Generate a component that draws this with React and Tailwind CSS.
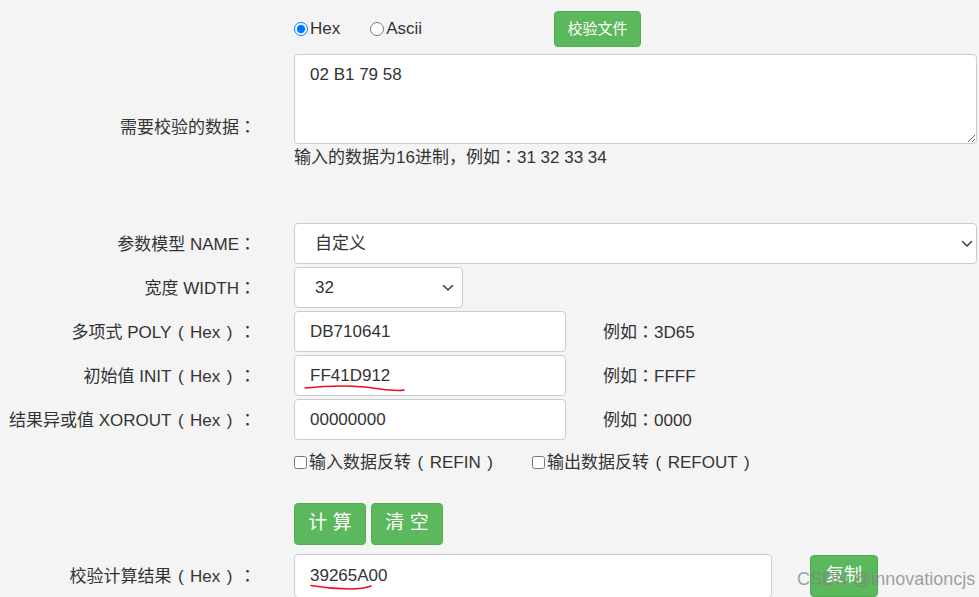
import React from "react";

const font = { fontFamily: '"Liberation Sans", Arial, "Noto Sans CJK SC", sans-serif' };
const tc = { fontFamily: '"Noto Sans CJK TC", sans-serif' };

function T({ children }) {
  const parts = String(children).split(/([（）：])/);
  return (
    <>
      {parts.map((p, i) => {
        if (p === "：")
          return (
            <span key={i} style={tc}>
              ：
            </span>
          );
        if (p === "（")
          return (
            <span key={i} className="inline-block w-[1.1em] text-center">
              (
            </span>
          );
        if (p === "）")
          return (
            <span key={i} className="inline-block w-[1.1em] text-center">
              )
            </span>
          );
        return <React.Fragment key={i}>{p}</React.Fragment>;
      })}
    </>
  );
}

function Chevron({ className }) {
  return (
    <svg className={className} width="12" height="8" viewBox="0 0 12 8" fill="none">
      <path d="M1.5 1.5 L6 6 L10.5 1.5" stroke="#444" strokeWidth="1.6" strokeLinecap="round" strokeLinejoin="round" />
    </svg>
  );
}

function Row({ label, children, className = "" }) {
  return (
    <div className={"flex items-center " + className}>
      <div className="w-[256px] shrink-0 text-right text-[17px] text-[#333]">
        <T>{label}</T>
      </div>
      <div className="ml-[38px] flex flex-1 items-center">{children}</div>
    </div>
  );
}

const inputCls =
  "h-[41px] rounded-[4px] border border-[#ccc] bg-white px-[15px] text-[17px] text-[#333] outline-none";

export default function App() {
  return (
    <div
      className="relative h-[597px] w-[979px] overflow-hidden bg-[#f4f4f4] text-[#333] [text-spacing-trim:space-all]"
      style={font}
    >
      {/* radios + file button */}
      <div className="flex pt-[11px]">
        <div className="w-[294px] shrink-0" />
        <div className="flex h-[36px] w-[260px] items-center text-[17px]">
          <label className="flex items-center">
            <input type="radio" name="fmt" defaultChecked className="m-0 h-[14px] w-[14px]" />
            <span className="ml-[2px]">Hex</span>
          </label>
          <label className="ml-[30px] flex items-center">
            <input type="radio" name="fmt" className="m-0 h-[14px] w-[14px]" />
            <span className="ml-[2px]">Ascii</span>
          </label>
        </div>
        <button className="h-[36px] w-[87px] rounded-[4px] border border-[#4cae4c] bg-[#5cb85c] text-[15px] text-white">
          校验文件
        </button>
      </div>

      {/* textarea row */}
      <div className="mt-[7px] flex">
        <div className="w-[256px] shrink-0 pt-[59px] text-right text-[17px]">
          <T>需要校验的数据：</T>
        </div>
        <div className="ml-[38px] flex-1 pr-[2px]">
          <textarea
            defaultValue="02 B1 79 58"
            className="block h-[90px] w-full rounded-[4px] border border-[#ccc] bg-white px-[15px] py-[9px] text-[17px] leading-[22px] text-[#333] outline-none"
            style={font}
          />
          <div className="mt-[1px] text-[17px] leading-[22px]">
            <T>输入的数据为16进制，例如：31 32 33 34</T>
          </div>
        </div>
      </div>

      {/* selects and inputs */}
      <div className="mt-[54px] flex flex-col gap-[3px]">
        <Row label="参数模型 NAME：">
          <div className="relative mr-[2px] flex-1">
            <select className={inputCls + " w-full appearance-none pl-[20px]"} style={font}>
              <option>自定义</option>
            </select>
            <Chevron className="pointer-events-none absolute right-[4px] top-[17px]" />
          </div>
        </Row>
        <Row label="宽度 WIDTH：">
          <div className="relative w-[169px]">
            <select className={inputCls + " w-full appearance-none pl-[20px]"} style={font}>
              <option>32</option>
            </select>
            <Chevron className="pointer-events-none absolute right-[9px] top-[17px]" />
          </div>
        </Row>
        <Row label="多项式 POLY（Hex）：">
          <input className={inputCls + " w-[272px]"} style={font} defaultValue="DB710641" />
          <span className="ml-[37px] text-[17px]">
            <T>例如：3D65</T>
          </span>
        </Row>
        <Row label="初始值 INIT（Hex）：">
          <div className="relative">
            <input className={inputCls + " w-[272px]"} style={font} defaultValue="FF41D912" />
            <svg className="pointer-events-none absolute left-[10px] top-[29px]" width="102" height="10" viewBox="0 0 102 10" fill="none">
              <path d="M1 4 C 20 2, 40 1, 60 3 S 90 8, 100 6" stroke="#e8101a" strokeWidth="1.6" strokeLinecap="round" />
            </svg>
          </div>
          <span className="ml-[37px] text-[17px]">
            <T>例如：FFFF</T>
          </span>
        </Row>
        <Row label="结果异或值 XOROUT（Hex）：">
          <input className={inputCls + " w-[272px]"} style={font} defaultValue="00000000" />
          <span className="ml-[37px] text-[17px]">
            <T>例如：0000</T>
          </span>
        </Row>
      </div>

      {/* checkboxes */}
      <div className="mt-[10px] flex">
        <div className="w-[294px] shrink-0" />
        <label className="flex w-[238px] items-center text-[17px]">
          <input type="checkbox" className="m-0 h-[13px] w-[13px]" />
          <span className="ml-[2px]">
            <T>输入数据反转（REFIN）</T>
          </span>
        </label>
        <label className="flex items-center text-[17px]">
          <input type="checkbox" className="m-0 h-[13px] w-[13px]" />
          <span className="ml-[2px]">
            <T>输出数据反转（REFOUT）</T>
          </span>
        </label>
      </div>

      {/* buttons */}
      <div className="mt-[27px] flex">
        <div className="w-[294px] shrink-0" />
        <button className="h-[42px] w-[72px] rounded-[4px] border border-[#4cae4c] bg-[#5cb85c] text-[19px] text-white">
          计 算
        </button>
        <button className="ml-[5px] h-[42px] w-[72px] rounded-[4px] border border-[#4cae4c] bg-[#5cb85c] text-[19px] text-white">
          清 空
        </button>
      </div>

      {/* result */}
      <div className="mt-[9px]">
        <Row label="校验计算结果（Hex）：">
          <div className="relative">
            <input
              readOnly
              className={inputCls + " h-[44px] w-[478px] bg-[#eee]"}
              style={font}
              defaultValue="39265A00"
            />
            <svg className="pointer-events-none absolute left-[16px] top-[30px]" width="64" height="8" viewBox="0 0 64 8" fill="none">
              <path d="M1 1.5 C 15 4, 28 5, 40 5 S 56 4, 61 2" stroke="#e8101a" strokeWidth="1.6" strokeLinecap="round" />
            </svg>
          </div>
          <button className="ml-[38px] h-[42px] w-[68px] rounded-[4px] border border-[#4cae4c] bg-[#5cb85c] text-[18px] text-white">
            复制
          </button>
        </Row>
      </div>

      {/* watermark */}
      <div className="pointer-events-none absolute left-[797px] top-[566px] text-[18px] text-[rgba(130,130,130,0.75)]">
        CSDN @innovationcjs
      </div>
    </div>
  );
}
